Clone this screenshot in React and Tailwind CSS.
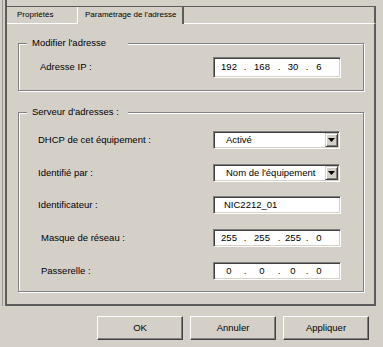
import React from 'react';

const sunken =
  'border border-t-[#808080] border-l-[#808080] border-b-white border-r-white bg-white shadow-[inset_1px_1px_0_#404040,inset_-1px_-1px_0_#d4d0c8]';

function IpField({ parts, height }) {
  const widths = ['w-[28px]', 'w-[30px]', 'w-[24px]', 'w-[20px]'];
  return (
    <div className={`${sunken} ${height} w-[128px] flex items-center pl-[1px]`}>
      {parts.map((p, i) => (
        <React.Fragment key={i}>
          <span className={`${widths[i]} text-center`}>{p}</span>
          {i < 3 && <span className="w-[4px] text-center">.</span>}
        </React.Fragment>
      ))}
    </div>
  );
}

function Select({ value }) {
  return (
    <div className={`${sunken} h-[18px] w-[127px] flex items-center p-[1px]`}>
      <span className="flex-1 pl-[11px]">{value}</span>
      <div className="w-[13px] h-[14px] bg-[#d4d0c8] border border-t-[#d4d0c8] border-l-[#d4d0c8] border-r-[#404040] border-b-[#404040] shadow-[inset_1px_1px_0_#fff,inset_-1px_-1px_0_#808080] flex items-center justify-center">
        <svg width="7" height="4" viewBox="0 0 7 4">
          <path d="M0 0h7L3.5 4z" fill="#000" />
        </svg>
      </div>
    </div>
  );
}

function Group({ title, className, children }) {
  return (
    <div
      className={`relative border border-[#808080] shadow-[inset_1px_1px_0_#fff,1px_1px_0_#fff] ${className}`}
    >
      <span className="absolute left-[8px] -top-[7px] w-[101px] pl-[5px] bg-[#d4d0c8] leading-[12px]">
        {title}
      </span>
      {children}
    </div>
  );
}

function Row({ label, labelPad, className, children }) {
  return (
    <div className={`flex items-center ${className}`}>
      <div className={`w-[194px] ${labelPad}`}>{label}</div>
      {children}
    </div>
  );
}

function Button({ children }) {
  return (
    <button className="w-[86px] h-[24px] border border-t-white border-l-white border-r-[#404040] border-b-[#404040] shadow-[inset_-1px_-1px_0_#808080] text-[9.5px]">
      {children}
    </button>
  );
}

export default function App() {
  return (
    <div className="w-[383px] h-[347px] bg-[#d4d0c8] font-['Liberation_Sans',Arial,sans-serif] text-[9.5px] text-black overflow-hidden">
      <div className="h-[306px] pl-[2px]">
        <div className="h-full border-l border-[#9a9894] pl-[2px]">
          <div className="h-full w-[371px] border-l-2 border-[#5c5c5c] flex flex-col">
            <div className="h-[6px]" />
            <div className="flex h-[18px] border-t border-[#5c5c5c]">
              <div className="w-[70px] border-b border-white pl-[10px] text-[8px] leading-[16px]">
                Propriétés
              </div>
              <div className="w-[107px] border-l border-white border-r-2 border-r-[#5c5c5c] pl-[7px] text-[8px] leading-[16px]">
                Paramétrage de l'adresse
              </div>
              <div className="flex-1 border-b border-white border-r-2 border-r-[#5c5c5c]" />
            </div>
            <div className="flex-1 border-r-2 border-b-2 border-[#5c5c5c] pt-[19px] pl-[11px] pr-[10px]">
              <Group title="Modifier l'adresse" className="pt-[13px] pb-[12px]">
                <Row label="Adresse IP :" labelPad="pl-[21px]">
                  <IpField parts={['192', '168', '30', '6']} height="h-[21px]" />
                </Row>
              </Group>
              <Group title="Serveur d'adresses :" className="mt-[21px] pt-[18px] pb-[11px]">
                <Row label="DHCP de cet équipement :" labelPad="pl-[19px]">
                  <Select value="Activé" />
                </Row>
                <Row label="Identifié par :" labelPad="pl-[19px]" className="mt-[15px]">
                  <Select value="Nom de l'équipement" />
                </Row>
                <Row label="Identificateur :" labelPad="pl-[19px]" className="mt-[14px]">
                  <div className={`${sunken} h-[18px] w-[128px] flex items-center pl-[10px]`}>
                    NIC2212_01
                  </div>
                </Row>
                <Row label="Masque de réseau :" labelPad="pl-[22px]" className="mt-[15px]">
                  <IpField parts={['255', '255', '255', '0']} height="h-[18px]" />
                </Row>
                <Row label="Passerelle :" labelPad="pl-[22px]" className="mt-[15px]">
                  <IpField parts={['0', '0', '0', '0']} height="h-[18px]" />
                </Row>
              </Group>
            </div>
          </div>
        </div>
      </div>
      <div className="flex gap-[7px] pl-[97px] pt-[10px]">
        <Button>OK</Button>
        <Button>Annuler</Button>
        <Button>Appliquer</Button>
      </div>
    </div>
  );
}
